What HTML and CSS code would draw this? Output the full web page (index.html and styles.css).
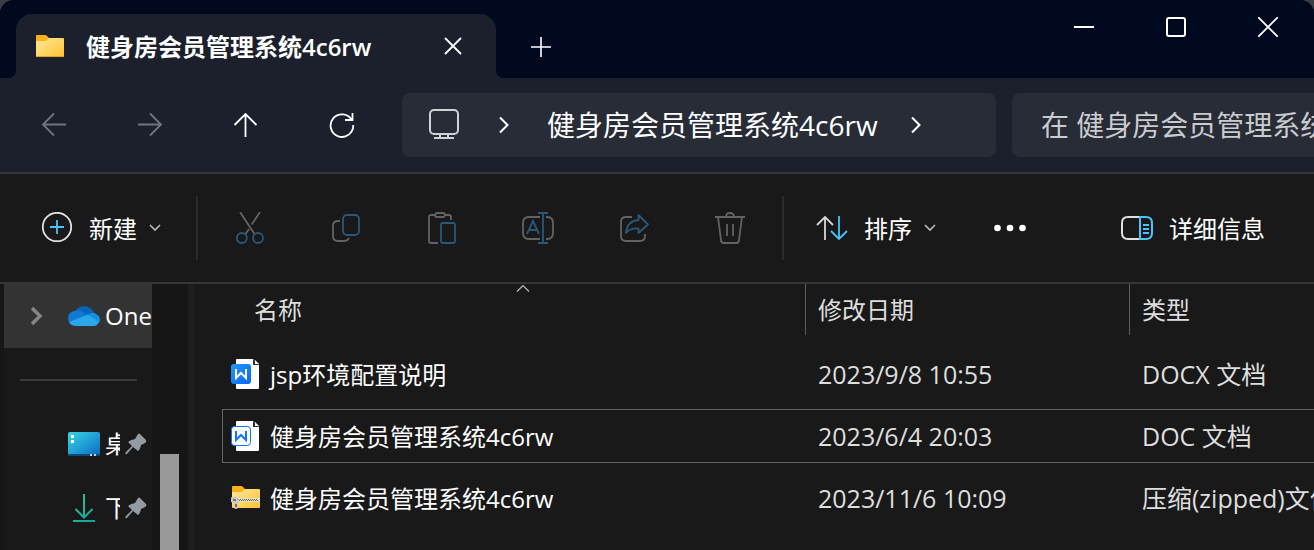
FILE: index.html
```html
<!DOCTYPE html>
<html lang="zh-CN">

<head>
    <meta charset="UTF-8">
    <meta name="viewport" content="width=device-width, initial-scale=1.0">
    <title>健身房会员管理系统4c6rw</title>
    <link rel="stylesheet" href="styles.css">
</head>

<body>
    <div class="window">
        <header class="titlebar">
            <div class="tab">
                <svg class="tab-icon" width="28" height="22" viewBox="0 0 28 22">
                    <defs>
                        <linearGradient id="folder" x1="0" y1="0" x2="1" y2="1">
                            <stop offset="0" stop-color="#ffe69e" />
                            <stop offset="1" stop-color="#fdc42e" />
                        </linearGradient>
                    </defs>
                    <path d="M0 1Q0 0 1 0H9Q10 0 11 1L13 3H27V8H0Z" fill="#fbb116" />
                    <path d="M0 6H9Q10 6 11 5L12 4Q13 3 14 3H27Q28 3 28 4V21Q28 22 27 22H1Q0 22 0 21Z" fill="url(#folder)" />
                    <path d="M0 21H28Q28 22 27 22H1Q0 22 0 21Z" fill="#e5a520" />
                </svg>
                <span class="tab-title">健身房会员管理系统4c6rw</span>
                <button class="tab-close" aria-label="关闭标签页">
                    <svg width="18" height="18" viewBox="0 0 18 18" stroke="#fff" stroke-width="1.8"><path d="M1 1L17 17M17 1L1 17" /></svg>
                </button>
            </div>
            <button class="tab-add" aria-label="添加新标签页">
                <svg width="20" height="20" viewBox="0 0 20 20" stroke="#fff" stroke-width="1.6"><path d="M10 0V20M0 10H20" /></svg>
            </button>
            <div class="controls">
                <button aria-label="最小化">
                    <svg width="20" height="20" viewBox="0 0 20 20" stroke="#fff" stroke-width="2"><path d="M0 10H20" /></svg>
                </button>
                <button aria-label="最大化">
                    <svg width="20" height="20" viewBox="0 0 20 20" fill="none" stroke="#fff" stroke-width="2"><rect x="1" y="1" width="18" height="18" rx="2" /></svg>
                </button>
                <button aria-label="关闭">
                    <svg width="20" height="20" viewBox="0 0 20 20" stroke="#fff" stroke-width="1.8"><path d="M0 0L20 20M20 0L0 20" /></svg>
                </button>
            </div>
        </header>

        <nav class="navbar">
            <button class="icon-btn" aria-label="后退" disabled>
                <svg width="26" height="26" viewBox="0 0 26 26" fill="none" stroke="#70747c" stroke-width="1.8"><path d="M25 12.500H2M13 1.500L2 12.500L13 23.500" /></svg>
            </button>
            <button class="icon-btn" aria-label="前进" disabled>
                <svg width="26" height="26" viewBox="0 0 26 26" fill="none" stroke="#70747c" stroke-width="1.8"><path d="M1 12.500H24M13 1.500L24 12.500L13 23.500" /></svg>
            </button>
            <button class="icon-btn" aria-label="向上">
                <svg width="26" height="26" viewBox="0 0 26 26" fill="none" stroke="#fff" stroke-width="1.8"><path d="M12.500 25V2M1.500 13L12.500 2L23.500 13" /></svg>
            </button>
            <button class="icon-btn" aria-label="刷新">
                <svg width="26" height="26" viewBox="0 0 26 26" fill="none" stroke="#fff" stroke-width="1.8"><path d="M23 8.500A11.300 11.300 0 1 0 24.200 13M23.500 1V8H16" /></svg>
            </button>
            <div class="address">
                <svg class="device" width="32" height="32" viewBox="0 0 32 32" fill="none" stroke="#d0d2d5" stroke-width="2"><rect x="2" y="1" width="28" height="24" rx="4" /><path d="M12 25V29M20 25V29M6 29H26" /></svg>
                <svg width="12" height="18" viewBox="0 0 12 18" fill="none" stroke="#fff" stroke-width="2"><path d="M2 1.500L9.500 9L2 16.500" /></svg>
                <a class="crumb" href="#">健身房会员管理系统4c6rw</a>
                <svg width="12" height="18" viewBox="0 0 12 18" fill="none" stroke="#fff" stroke-width="2"><path d="M2 1.500L9.500 9L2 16.500" /></svg>
            </div>
            <input class="search" type="text" aria-label="搜索" placeholder="在 健身房会员管理系统4c6rw 中搜索">
        </nav>

        <div class="toolbar">
            <button class="text-btn new-btn">
                <svg width="32" height="32" viewBox="0 0 32 32" fill="none" stroke-width="1.8"><circle cx="16" cy="15" r="14.200" stroke="#e0e0e0" /><path d="M16 8V22M9 15H23" stroke="#4cc2ff" /></svg>
                <span>新建</span>
                <svg width="12" height="8" viewBox="0 0 12 8" fill="none" stroke="#bbb" stroke-width="1.6"><path d="M1 1L6 6L11 1" /></svg>
            </button>
            <div class="separator"></div>
            <div class="actions">
                <button class="icon-btn" aria-label="剪切" disabled>
                    <svg width="32" height="32" viewBox="0 0 32 32" fill="none" stroke-width="1.8"><path d="M6 0L20.500 22M26 0L17.700 12.500M15 17L11.500 22" stroke="#636363" /><circle cx="7.800" cy="26" r="5" stroke="#28597a" /><circle cx="24" cy="26" r="5" stroke="#28597a" /></svg>
                </button>
                <button class="icon-btn" aria-label="复制" disabled>
                    <svg width="32" height="32" viewBox="0 0 32 32" fill="none" stroke-width="1.8"><path d="M10 9H8Q3 9 3 14V24Q3 29 8 29H14Q18 29 19 26" stroke="#636363" /><rect x="13" y="3" width="16" height="20" rx="4" stroke="#28597a" /></svg>
                </button>
                <button class="icon-btn" aria-label="粘贴" disabled>
                    <svg width="32" height="32" viewBox="0 0 32 32" fill="none" stroke-width="1.8"><path d="M9 3H5Q3 3 3 5V29Q3 31 5 31H12M19 3H23Q25 3 25 5V8" stroke="#636363" /><rect x="9" y="1" width="10" height="4" rx="2" stroke="#636363" /><rect x="15" y="11" width="14" height="20" rx="2" stroke="#28597a" /></svg>
                </button>
                <button class="icon-btn" aria-label="重命名" disabled>
                    <svg width="32" height="32" viewBox="0 0 32 32" fill="none" stroke-width="1.8"><path d="M18 5H7Q1 5 1 11V21Q1 27 7 27H18M24 5H25Q31 5 31 11V21Q31 27 25 27H24" stroke="#636363" /><path d="M16 1H26M16 31H26M21 1V31M5 22L11 9L17 22M7 18H15" stroke="#28597a" /></svg>
                </button>
                <button class="icon-btn" aria-label="共享" disabled>
                    <svg width="32" height="32" viewBox="0 0 32 32" fill="none" stroke-width="1.8" stroke-linejoin="round"><path d="M14 5H8Q3 5 3 10V24Q3 29 8 29H22Q27 29 27 24V22" stroke="#636363" /><path d="M20.500 3L30 12.500L20.500 21V16.500Q12 16 8 21Q9 9 20.500 8Z" stroke="#28597a" /></svg>
                </button>
                <button class="icon-btn" aria-label="删除" disabled>
                    <svg width="32" height="32" viewBox="0 0 32 32" fill="none" stroke="#636363" stroke-width="1.8"><path d="M1 5H31M12 5Q12 1 16 1T20 5M4 5L7 28Q7 31 10 31H22Q25 31 25 28L28 5M13 12V24M19 12V24" /></svg>
                </button>
            </div>
            <div class="separator"></div>
            <button class="text-btn">
                <svg width="32" height="32" viewBox="0 0 32 32" fill="none" stroke-width="1.8"><path d="M9 28V5M1 13L9 5L17 13" stroke="#d6d6d6" /><path d="M23 4V27M15 19L23 27L31 19" stroke="#4cc2ff" /></svg>
                <span>排序</span>
                <svg width="12" height="8" viewBox="0 0 12 8" fill="none" stroke="#bbb" stroke-width="1.6"><path d="M1 1L6 6L11 1" /></svg>
            </button>
            <button class="icon-btn more-btn" aria-label="查看更多">
                <svg width="32" height="8" viewBox="0 0 32 8" fill="#fff"><circle cx="3.500" cy="4" r="3.300" /><circle cx="16" cy="4" r="3.300" /><circle cx="28.500" cy="4" r="3.300" /></svg>
            </button>
            <button class="text-btn details-btn">
                <svg width="32" height="32" viewBox="0 0 32 32" fill="none" stroke-width="2"><path d="M19 5H7Q1 5 1 11V21Q1 27 7 27H19" stroke="#e0e0e0" /><path d="M19 5H25Q31 5 31 11V21Q31 27 25 27H19ZM22 13H28M22 17H28M22 21H28" stroke="#4cc2ff" /></svg>
                <span>详细信息</span>
            </button>
        </div>

        <div class="content">
            <aside class="sidebar">
                <div class="tree">
                    <a class="tree-item current" href="#">
                        <svg class="expander" width="14" height="20" viewBox="0 0 14 20" fill="none" stroke="#858585" stroke-width="3.5"><path d="M2 2L10 10L2 18" /></svg>
                        <svg width="32" height="22" viewBox="0 0 32 22">
                            <path d="M6 9A10.500 10.500 0 0 1 26 8L18 14Z" fill="#0764b8" />
                            <path d="M10 20H7A7 7 0 0 1 7 6Q12 4 16 8L22 12Z" fill="#0f7ad4" />
                            <path d="M20 10Q24 6 28 9A6 6 0 0 1 31 18L18 12Z" fill="#1590df" />
                            <path d="M1 17L20 9.500L31 17Q29 21 26 21H8Q3 21 1 17Z" fill="#28a8ea" />
                        </svg>
                        <span class="tree-label">OneDrive</span>
                    </a>
                    <hr class="tree-line">
                    <a class="tree-item" href="#">
                        <svg width="32" height="24" viewBox="0 0 32 24">
                            <defs>
                                <linearGradient id="desktop" x1="0" y1="0" x2="1" y2="1">
                                    <stop offset="0" stop-color="#37d7e4" />
                                    <stop offset="1" stop-color="#0a69c4" />
                                </linearGradient>
                            </defs>
                            <rect width="32" height="24" rx="2" fill="url(#desktop)" />
                            <path d="M0 22H32Q32 24 30 24H2Q0 24 0 22Z" fill="#0d4773" />
                            <path d="M3 3H6V6H3ZM3 8H6V11H3Z" fill="#fff" />
                            <path d="M22 22H24V24H22ZM26 22H28V24H26Z" fill="#b5d5ea" />
                        </svg>
                        <span class="tree-label short">桌面</span>
                        <svg class="pin" width="22" height="22" viewBox="0 0 22 22" fill="#929ca4"><path d="M13 1Q14 0 15 1L21 7Q22 9 20 10L16 12Q15 17 13 18L8 14L2 21L0 21L1 19L7 13L3 9Q5 7 10 6Z" /></svg>
                    </a>
                    <a class="tree-item" href="#">
                        <svg width="32" height="28" viewBox="0 0 32 28" fill="none" stroke-width="2">
                            <defs>
                                <linearGradient id="download" gradientUnits="userSpaceOnUse" x1="5" y1="0" x2="27" y2="28">
                                    <stop offset="0" stop-color="#2fc48b" />
                                    <stop offset="1" stop-color="#14a1a0" />
                                </linearGradient>
                            </defs>
                            <path d="M16 0V23M7.500 15L16 23.500L24.500 15M5 27H27" stroke="url(#download)" />
                        </svg>
                        <span class="tree-label short">下载</span>
                        <svg class="pin" width="22" height="22" viewBox="0 0 22 22" fill="#929ca4"><path d="M13 1Q14 0 15 1L21 7Q22 9 20 10L16 12Q15 17 13 18L8 14L2 21L0 21L1 19L7 13L3 9Q5 7 10 6Z" /></svg>
                    </a>
                </div>
                <div class="scrollbar"><div class="thumb"></div></div>
            </aside>

            <main class="files">
                <svg class="sort-mark" width="14" height="8" viewBox="0 0 14 8" fill="none" stroke="#bbb" stroke-width="1.2"><path d="M1 7.500L7 1.500L13 7.500" /></svg>
                <table>
                    <colgroup>
                        <col class="col-name">
                        <col class="col-date">
                        <col>
                    </colgroup>
                    <thead>
                        <tr>
                            <th><div>名称</div></th>
                            <th><div>修改日期</div></th>
                            <th><div>类型</div></th>
                        </tr>
                    </thead>
                    <tbody>
                        <tr>
                            <td>
                                <div class="file-name">
                                    <svg width="30" height="32" viewBox="0 0 30 32">
                                        <defs>
                                            <linearGradient id="docx" x1="0" y1="0" x2="1" y2="1">
                                                <stop offset="0" stop-color="#2496ff" />
                                                <stop offset="1" stop-color="#0868f5" />
                                            </linearGradient>
                                        </defs>
                                        <path d="M5 2Q5 1 6 1H22L28 7V30Q28 31 27 31H6Q5 31 5 30Z" fill="#fff" />
                                        <path d="M22 1V7H28Z" fill="#26303c" />
                                        <path d="M24 2L28 6H24Z" fill="#fff" />
                                        <rect x="0" y="6" width="20" height="20" rx="3" fill="url(#docx)" />
                                        <path d="M5 11V20L10 15L15 20V11" fill="none" stroke="#fff" stroke-width="2" />
                                    </svg>
                                    <span>jsp环境配置说明</span>
                                </div>
                            </td>
                            <td>2023/9/8 10:55</td>
                            <td>DOCX 文档</td>
                        </tr>
                        <tr class="focused">
                            <td>
                                <div class="file-name">
                                    <svg width="30" height="32" viewBox="0 0 30 32">
                                        <path d="M5 2Q5 1 6 1H22L28 7V30Q28 31 27 31H6Q5 31 5 30Z" fill="#fff" />
                                        <path d="M22 1V7H28Z" fill="#26303c" />
                                        <path d="M24 2L28 6H24Z" fill="#fff" />
                                        <rect x="0.500" y="6.500" width="19" height="19" rx="3" fill="#fff" stroke="#1473f6" />
                                        <path d="M5 11V20L10 15L15 20V11" fill="none" stroke="#1473f6" stroke-width="2" />
                                    </svg>
                                    <span>健身房会员管理系统4c6rw</span>
                                </div>
                            </td>
                            <td>2023/6/4 20:03</td>
                            <td>DOC 文档</td>
                        </tr>
                        <tr>
                            <td>
                                <div class="file-name">
                                    <svg width="30" height="32" viewBox="0 0 30 32">
                                        <path d="M1 5Q1 4 2 4H10Q11 4 12 5L14 7H28V12H1Z" fill="#fbb116" />
                                        <path d="M1 10H10Q11 10 12 9L13 8Q14 7 15 7H28Q29 7 29 8V25Q29 26 28 26H2Q1 26 1 25Z" fill="url(#folder)" />
                                        <path d="M7 16H29V20H7Z" fill="#e2dccb" />
                                        <path d="M7 17.500H27" stroke="#6e6857" stroke-width="1" stroke-dasharray="1 1" />
                                        <path d="M8 18.500H28" stroke="#6e6857" stroke-width="1" stroke-dasharray="1 1" />
                                        <path d="M0 16Q0 15 1 15H6Q8 16 7 19V25Q7 27 5 27Q3 27 3 25V21L0 20Z" fill="#c9c9c4" />
                                        <path d="M2 17H5V19H2ZM4 22H6V25H4Z" fill="#77756e" />
                                    </svg>
                                    <span>健身房会员管理系统4c6rw</span>
                                </div>
                            </td>
                            <td>2023/11/6 10:09</td>
                            <td>压缩(zipped)文件夹</td>
                        </tr>
                    </tbody>
                </table>
            </main>
        </div>
    </div>
</body>

</html>
```
FILE: styles.css
```css
* {
    margin: 0;
    padding: 0;
    box-sizing: border-box;
}
body {
    background-color: #3a3d42;
    color: #fff;
    font-family: "Open Sans", "Noto Sans CJK SC", sans-serif;
    font-size: 24px;
    line-height: 32px;
}
button {
    display: flex;
    align-items: center;
    justify-content: center;
    border: none;
    background: none;
    color: inherit;
    font: inherit;
    cursor: pointer;
}
button:disabled {
    cursor: default;
}
a {
    color: inherit;
    text-decoration: none;
}
svg {
    display: block;
    flex-shrink: 0;
}
.window {
    display: flex;
    flex-direction: column;
    min-height: 100vh;
    border-radius: 14px 14px 0 0;
    background-color: #191919;
    overflow: hidden;
}

/* title bar */
.titlebar {
    display: flex;
    align-items: flex-end;
    padding: 0 0 0 16px;
    background-color: #000920;
}
.tab {
    position: relative;
    display: flex;
    align-items: center;
    width: 480px;
    height: 64px;
    margin-top: 14px;
    padding: 0 20px;
    border-radius: 16px 16px 0 0;
    background-color: #1b202c;
}
.tab::before,
.tab::after {
    content: "";
    position: absolute;
    bottom: 0;
    width: 8px;
    height: 8px;
}
.tab::before {
    left: -8px;
    background: radial-gradient(circle at 0 0, transparent 8px, #1b202c 8px);
}
.tab::after {
    right: -8px;
    background: radial-gradient(circle at 100% 0, transparent 8px, #1b202c 8px);
}
.tab-title {
    margin-left: 22px;
    padding-top: 2px;
    font-weight: 600;
    white-space: nowrap;
}
.tab-close {
    width: 46px;
    height: 46px;
    margin-left: auto;
}
.tab-add {
    width: 60px;
    height: 62px;
    margin-left: 15px;
}
.controls {
    display: flex;
    align-self: flex-start;
    margin-left: auto;
}
.controls button {
    width: 92px;
    height: 54px;
}

/* navigation */
.navbar {
    display: flex;
    align-items: center;
    padding: 15px 0 15px 22px;
    border-bottom: 2px solid #363636;
    background-color: #1b202c;
}
.icon-btn {
    width: 64px;
    height: 64px;
    flex-shrink: 0;
}
.navbar .icon-btn + .icon-btn {
    margin-left: 32px;
}
.address {
    display: flex;
    flex: 1;
    align-items: center;
    gap: 32px;
    height: 64px;
    margin: 0 16px 0 28px;
    padding: 0 26px;
    border-radius: 8px;
    background-color: #272c37;
    font-size: 28px;
}
.device {
    margin-right: 6px;
}
.crumb {
    margin-left: 5px;
    white-space: nowrap;
}
.search {
    width: 302px;
    height: 64px;
    padding-left: 29px;
    border: none;
    border-radius: 8px 0 0 8px;
    outline: none;
    background-color: #272c37;
    color: #fff;
    font-family: inherit;
    font-size: 28px;
}
.search::placeholder {
    color: #cacbce;
    opacity: 1;
}

/* toolbar */
.toolbar {
    display: flex;
    align-items: center;
    padding: 22px 37px 22px 25px;
    border-bottom: 2px solid #363636;
    background-color: #191919;
}
.text-btn {
    gap: 12px;
    height: 64px;
    padding: 0 12px;
    white-space: nowrap;
}
.text-btn span {
    margin-left: 4px;
    padding-top: 2px;
}
.new-btn {
    padding: 0 15px 0 16px;
}
.separator {
    width: 2px;
    height: 64px;
    margin: 0 20px;
    background-color: #2b2b2b;
}
.actions {
    display: flex;
    gap: 32px;
}
.more-btn {
    margin-left: 30px;
}
.details-btn {
    margin-left: auto;
}

/* sidebar */
.content {
    display: flex;
    flex: 1;
}
.sidebar {
    display: flex;
    width: 194px;
    flex-shrink: 0;
    padding-left: 4px;
    border-right: 6px solid #1e1e1e;
    background-color: #161616;
}
.tree {
    width: 148px;
    background-color: #191919;
}
.tree-item {
    display: flex;
    align-items: center;
    height: 64px;
    padding-left: 64px;
    overflow: hidden;
}
.tree-item.current {
    padding-left: 26px;
    background-color: #333;
}
.expander {
    margin-right: 24px;
}
.tree-label {
    margin-left: 5px;
    white-space: nowrap;
}
.tree-label.short {
    width: 15px;
    overflow: hidden;
}
.pin {
    margin-left: 5px;
}
.tree-line {
    height: 2px;
    margin: 31px 15px 31px 16px;
    border: none;
    background-color: #3a3a3a;
}
.scrollbar {
    flex: 1;
    padding: 170px 9px 0 8px;
}
.thumb {
    height: 100%;
    background-color: #999;
}

/* file list */
.files {
    position: relative;
    flex: 1;
    min-width: 0;
    padding-left: 28px;
    overflow: hidden;
}
.sort-mark {
    position: absolute;
    top: 0;
    left: 322px;
}
table {
    width: 100%;
    table-layout: fixed;
    border-collapse: separate;
    border-spacing: 0 8px;
    margin-top: -8px;
}
.col-name {
    width: 583px;
}
.col-date {
    width: 324px;
}
th {
    height: 55px;
    color: #dedede;
    font-weight: normal;
    text-align: left;
    vertical-align: top;
}
th div {
    height: 51px;
    padding: 10px 12px 0;
    border-left: 1px solid #5e5e5e;
}
th:first-child div {
    padding-left: 31px;
    border-left-color: transparent;
}
td {
    height: 54px;
    padding-left: 13px;
    border: 1px solid transparent;
    border-width: 1px 0;
    color: #dedede;
    font-size: 25px;
    white-space: nowrap;
}
td:first-child {
    padding-left: 8px;
    border-left-width: 1px;
    color: #fff;
    font-size: 24px;
}
.focused td {
    border-color: #666;
}
.file-name {
    display: flex;
    align-items: center;
    gap: 9px;
}
.file-name span {
    padding-top: 2px;
}
```
